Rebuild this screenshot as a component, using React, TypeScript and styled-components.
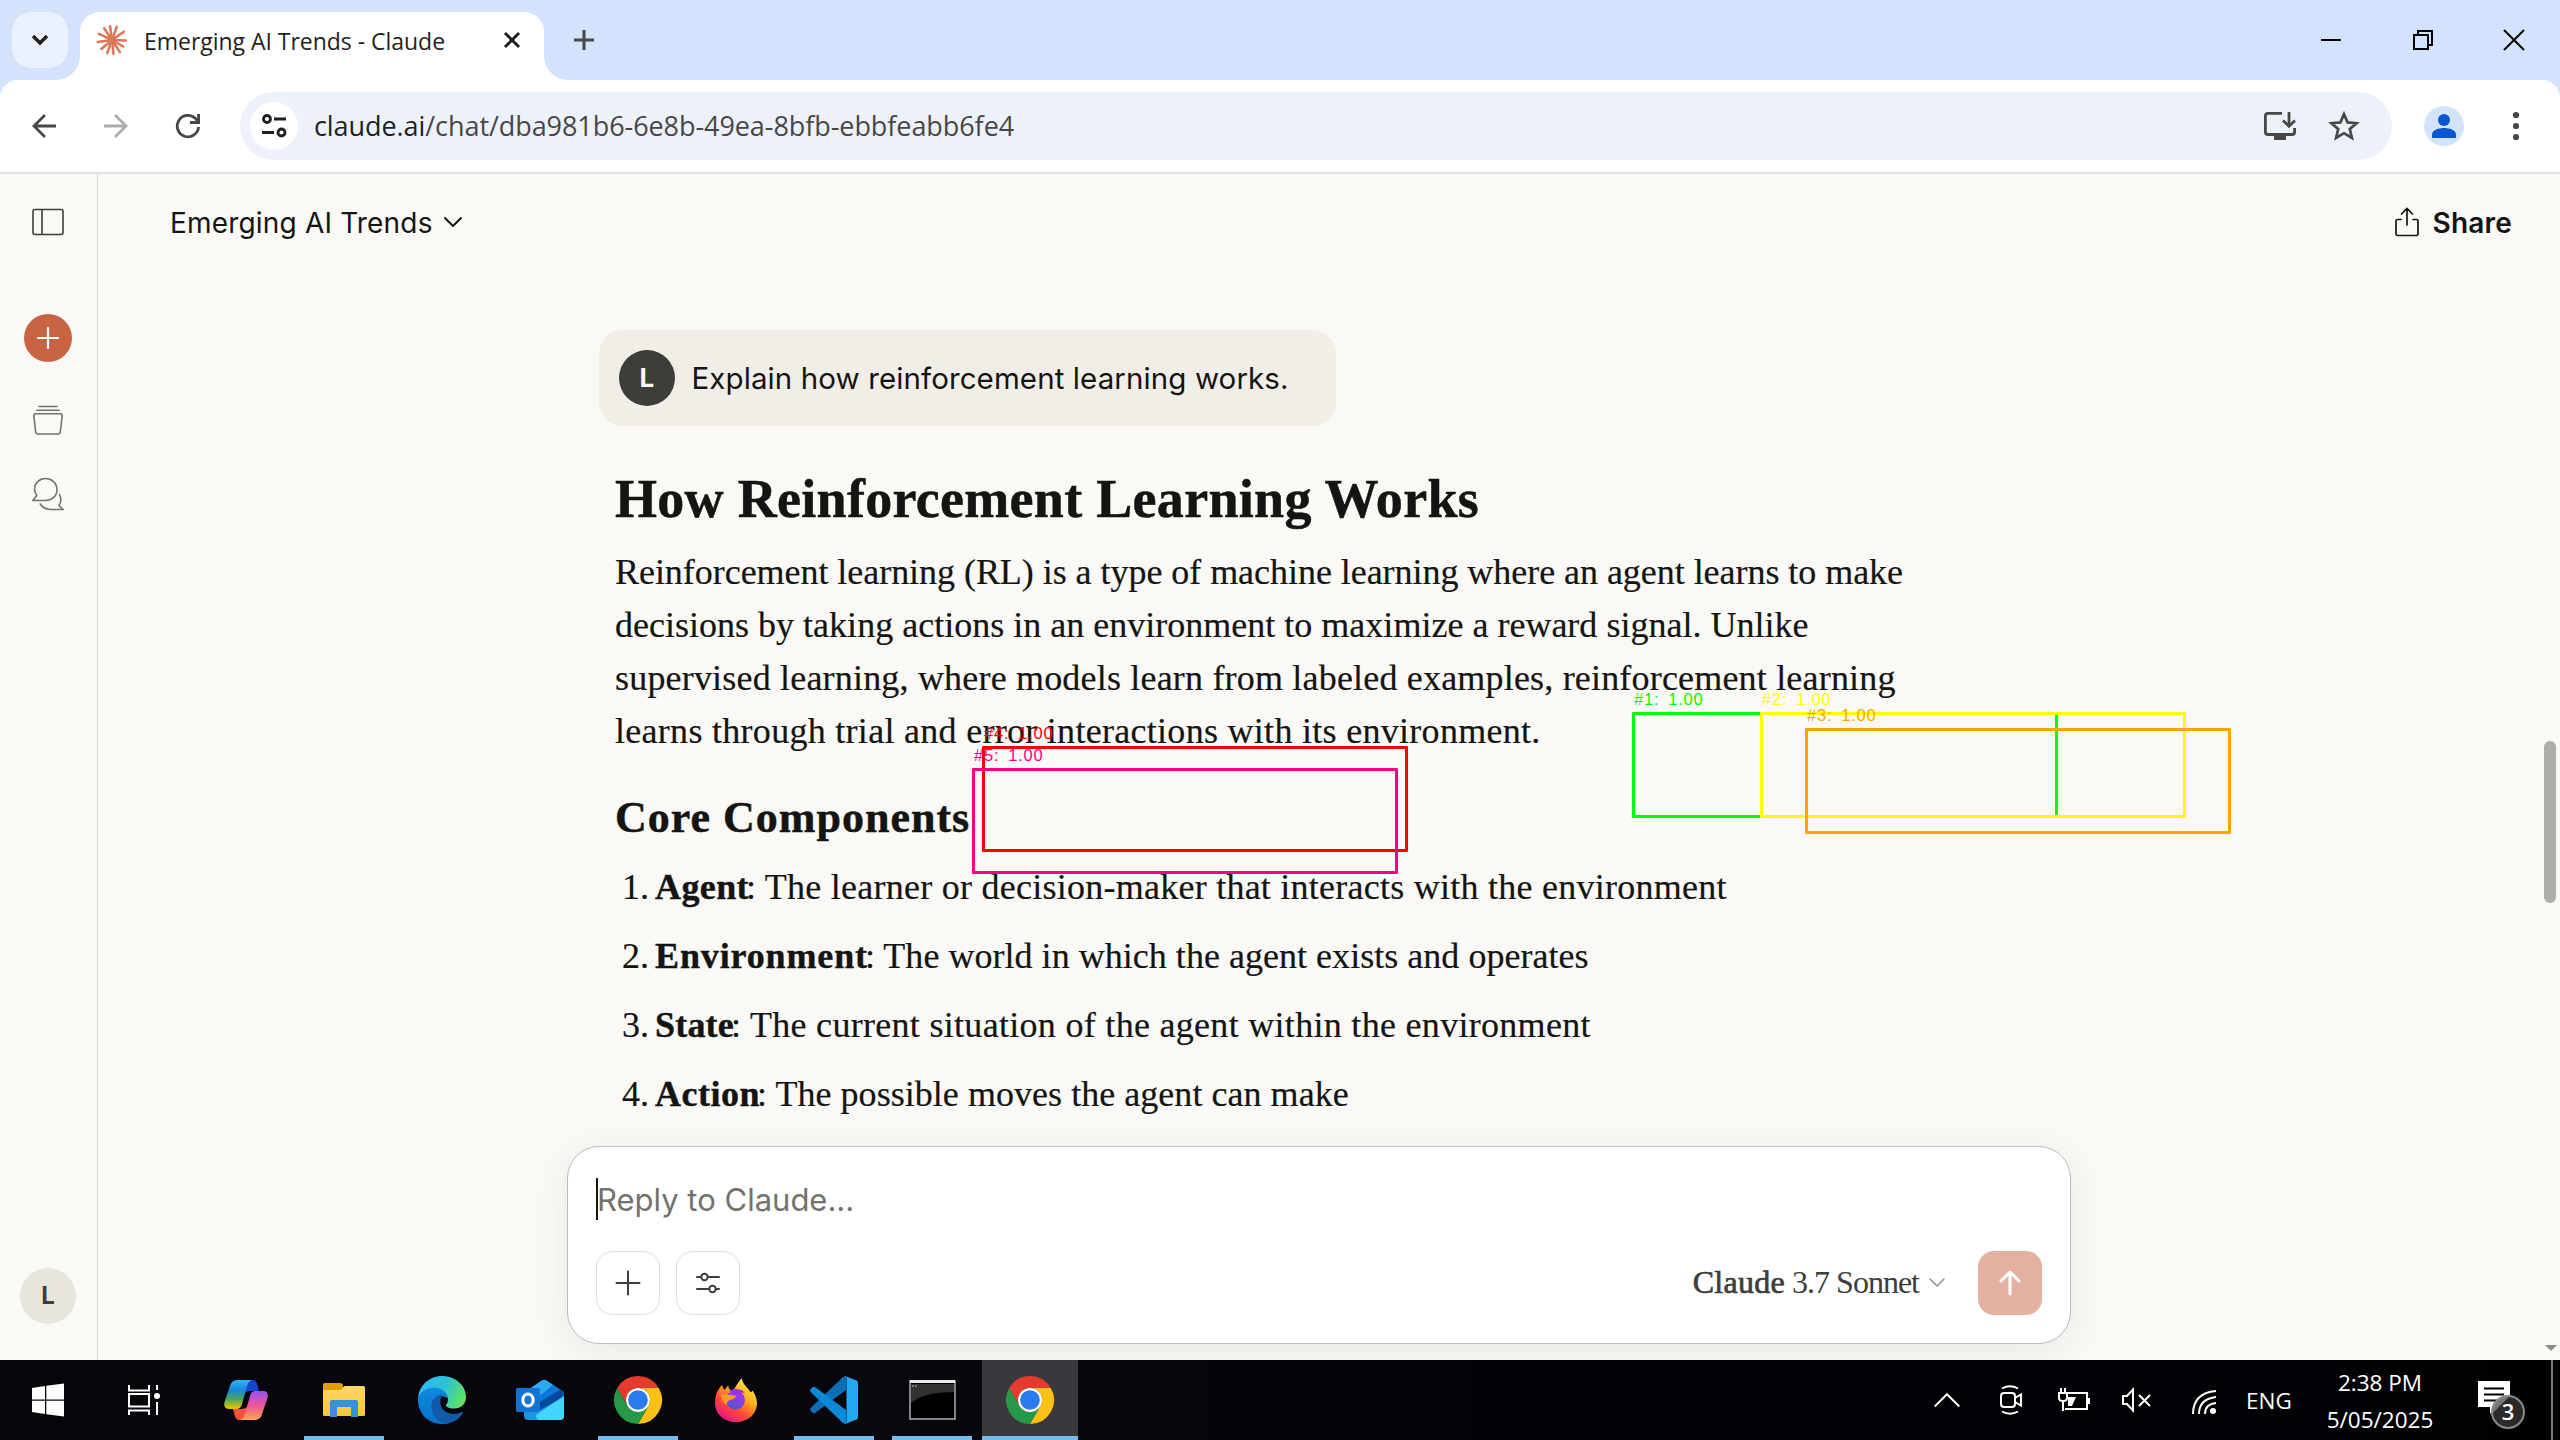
import React from "react";
import styled, { createGlobalStyle, css } from "styled-components";

const ui = `"Open Sans", "Noto Sans", sans-serif`;
const sans = `Inter, "Liberation Sans", sans-serif`;
const serif = `"Liberation Serif", "Noto Serif", serif`;

const Global = createGlobalStyle`
  * { box-sizing: border-box; }
  html, body { margin: 0; background: #faf9f5; }
  body { overflow: hidden; }
  svg { display: block; flex: none; overflow: visible; }
`;

const Screen = styled.div`
  position: relative;
  display: grid;
  grid-template-rows: 80px 94px 1186px 80px;
  width: 2560px;
  height: 1440px;
  overflow: hidden;
  background: #d3e3fd;
`;

/* ---------- browser chrome ---------- */
const TabStrip = styled.div`
  display: flex;
  padding: 12px 0 0 12px;
`;
const TabSearch = styled.div`
  display: grid;
  place-items: center;
  width: 56px;
  height: 56px;
  margin-right: 12px;
  border-radius: 20px;
  background: #ebf1fe;
`;
const Tab = styled.div`
  position: relative;
  display: flex;
  align-items: center;
  width: 464px;
  height: 68px;
  padding: 0 24px 12px 17px;
  border-radius: 20px 20px 0 0;
  background: #fff;
  &::before, &::after {
    content: "";
    position: absolute;
    bottom: 0;
    width: 24px;
    height: 24px;
  }
  &::before { left: -24px; background: radial-gradient(circle at 0 0, transparent 23.5px, #fff 24.2px); }
  &::after { right: -24px; background: radial-gradient(circle at 100% 0, transparent 23.5px, #fff 24.2px); }
`;
const TabTitle = styled.span`
  flex: 1;
  margin-left: 17px;
  padding-top: 2px;
  font: 400 23px/32px ${ui};
  letter-spacing: -0.03px;
  color: #1f1f1f;
  white-space: nowrap;
`;
const NewTab = styled.div`
  margin: 18px 0 0 30px;
`;
const WindowControls = styled.div`
  display: flex;
  gap: 71.500px;
  margin: 18px 36px 0 auto;
`;

const Toolbar = styled.div`
  display: flex;
  align-items: center;
  padding: 0 36px 0 26px;
  border-radius: 18px 18px 0 0;
  border-bottom: 2px solid #e1e1e1;
  background: #fff;
`;
const NavButton = styled.div<{ $dim?: boolean }>`
  display: grid;
  place-items: center;
  width: 36px;
  height: 36px;
  margin-right: 36px;
  color: ${(p) => (p.$dim ? "#acacac" : "#474747")};
`;
const AddressBar = styled.div`
  display: flex;
  align-items: center;
  width: 2152px;
  height: 68px;
  margin-left: -2px;
  padding: 0 32px 0 10px;
  border-radius: 34px;
  background: #edf1fa;
`;
const SiteInfo = styled.div`
  display: grid;
  place-items: center;
  width: 48px;
  height: 48px;
  border-radius: 50%;
  background: #fff;
`;
const Url = styled.span`
  flex: 1;
  margin-left: 16px;
  padding-bottom: 1px;
  font: 400 27px/36px ${ui};
  letter-spacing: -0.07px;
  color: #474747;
  white-space: nowrap;
  b { font-weight: 400; color: #1f1f1f; }
`;
const BarIcons = styled.div`
  display: flex;
  align-items: center;
  gap: 32px;
  color: #474747;
`;
const Profile = styled.div`
  display: grid;
  place-items: center;
  width: 40px;
  height: 40px;
  margin: 0 48px 0 32px;
  border-radius: 50%;
  background: #d3e3fd;
`;

/* ---------- page ---------- */
const Page = styled.div`
  display: grid;
  grid-template-columns: 98px 2443px 19px;
  background: #faf9f5;
  overflow: hidden;
`;
const Sidebar = styled.nav`
  display: flex;
  flex-direction: column;
  align-items: center;
  padding: 34px 1px 36px 0;
  border-right: 1px solid #d5d4cf;
`;
const NewChat = styled.div`
  display: grid;
  place-items: center;
  width: 48px;
  height: 48px;
  margin: 78px 0 43px;
  border-radius: 50%;
  background: #c96442;
`;
const ChatsLink = styled.div`
  margin-top: 42px;
`;
const Avatar = styled.div<{ $dark?: boolean }>`
  display: grid;
  place-items: center;
  flex: none;
  width: 56px;
  height: 56px;
  border-radius: 50%;
  font: 700 26px/56px ${sans};
  background: ${(p) => (p.$dark ? "#3d3d3a" : "#e8e6dc")};
  color: ${(p) => (p.$dark ? "#faf9f5" : "#3d3d3a")};
`;
const AccountAvatar = styled(Avatar)`
  margin-top: auto;
  font-size: 24px;
`;

const Main = styled.main`
  display: flex;
  flex-direction: column;
  min-height: 0;
  color: #141413;
`;
const ChatHeader = styled.header`
  display: flex;
  align-items: center;
  height: 98px;
  padding: 0 29px 0 72px;
  font: 400 28px/40px ${sans};
  letter-spacing: 0.18px;
`;
const TitleChevron = styled.div`
  margin: -2px auto 0 11px;
`;
const ShareButton = styled.div`
  display: flex;
  align-items: center;
  gap: 14px;
  font-weight: 600;
`;
const ShareIcon = styled.div`
  margin-top: -3px;
`;
const Messages = styled.section`
  display: flex;
  flex-direction: column;
  align-items: flex-start;
  height: 857px;
  padding: 58px 0 0 501px;
`;
const UserBubble = styled.div`
  display: flex;
  align-items: center;
  gap: 16.500px;
  width: 737px;
  height: 96px;
  padding: 0 20px;
  border-radius: 24px;
  background: #f0eee6;
  font: 400 29.5px/40px ${sans};
  letter-spacing: 0.1px;
  white-space: nowrap;
`;
const Answer = styled.article`
  width: 1400px;
  margin: 40.7px 0 0 16px;
  font: 400 36px/52.8px ${serif};
  -webkit-text-stroke: 0.2px #141413;
  white-space: nowrap;
`;
const Heading = styled.h1`
  margin: 0 0 14.500px;
  font: 700 54px/65px ${serif};
  letter-spacing: 0.3px;
  -webkit-text-stroke: 0.5px #141413;
`;
const Subheading = styled.h2`
  margin: 34.500px 0 17.500px;
  font: 700 44px/52px ${serif};
  letter-spacing: 1px;
  -webkit-text-stroke: 0.5px #141413;
`;
const Paragraph = styled.p`
  margin: 0;
`;
const TextLine = styled.span<{ $track: number }>`
  display: block;
  letter-spacing: ${(p) => p.$track}px;
`;
const Definition = styled(TextLine)`
  margin-left: -3px;
`;
const List = styled.ol`
  display: flex;
  flex-direction: column;
  gap: 16.1px;
  margin: 0;
  padding: 0;
  list-style: none;
`;
const Item = styled.li`
  display: grid;
  grid-template-columns: 40px auto auto 1fr;
`;
const Ordinal = styled.span`
  padding-right: 6px;
  text-align: right;
`;
const Term = styled.strong<{ $track: number }>`
  letter-spacing: ${(p) => p.$track}px;
  -webkit-text-stroke: 0.4px #141413;
`;

const Composer = styled.section`
  display: flex;
  flex-direction: column;
  justify-content: space-between;
  width: 1504px;
  height: 198px;
  margin: 17px 0 0 469px;
  padding: 31px 28px 28px;
  border: 1px solid #bcbcba;
  border-radius: 32px;
  background: #fff;
  box-shadow: 0 8px 40px rgba(0, 0, 0, 0.07);
`;
const Prompt = styled.div`
  display: flex;
  align-items: center;
  height: 42px;
  border-left: 2px solid #141413;
  font: 400 31px/42px ${sans};
  color: #73726c;
  span { padding-top: 1px; margin-left: -1px; }
`;
const Controls = styled.div`
  display: flex;
  align-items: center;
  gap: 16px;
`;
const ToolButton = styled.div`
  display: grid;
  place-items: center;
  width: 64px;
  height: 64px;
  border: 1px solid #dededc;
  border-radius: 16px;
  color: #3d3d3a;
`;
const ModelPicker = styled.div`
  display: flex;
  align-items: center;
  margin-left: auto;
  margin-right: 17px;
  padding-bottom: 2px;
  font: 400 32px/44px ${serif};
  color: #3d3d3a;
  white-space: nowrap;
`;
const ModelBrand = styled.span`
  margin-right: 7px;
  letter-spacing: 0.3px;
  -webkit-text-stroke: 0.7px #3d3d3a;
`;
const ModelName = styled.span`
  margin-right: 10px;
  letter-spacing: -1px;
`;
const Send = styled(ToolButton)`
  border: 0;
  background: #e4b1a0;
  color: #fff;
`;

const ScrollTrack = styled.div`
  display: flex;
  flex-direction: column;
  align-items: center;
  padding-top: 567px;
`;
const ScrollThumb = styled.div`
  width: 12px;
  height: 162px;
  margin-right: 1px;
  border-radius: 6px;
  background: #aeada9;
`;
const ScrollArrow = styled.div`
  margin: auto 0 9px;
  border: 6px solid transparent;
  border-top: 6px solid #8b8b8b;
  border-bottom: 0;
`;

/* ---------- detection boxes over the page ---------- */
const Detection = styled.div<{ $x: number; $y: number; $c: string }>`
  position: absolute;
  left: ${(p) => p.$x}px;
  top: ${(p) => p.$y}px;
  width: 426px;
  height: 106px;
  border: 3px solid ${(p) => p.$c};
  border-radius: 1px;
`;
const DetectionLabel = styled.span<{ $c: string }>`
  position: absolute;
  left: -1px;
  top: -26px;
  font: 400 16.500px/20px "Liberation Sans", sans-serif;
  letter-spacing: 0.8px;
  word-spacing: 3.5px;
  color: ${(p) => p.$c};
  white-space: nowrap;
`;

/* ---------- taskbar ---------- */
const Taskbar = styled.footer`
  display: flex;
  background: linear-gradient(90deg, #05050b, #08070d 35%, #020306 60%, #010104);
  color: #fff;
`;
const Slots = styled.div`
  display: flex;
  gap: 2px;
`;
const Slot = styled.div<{ $open?: boolean; $active?: boolean }>`
  display: grid;
  place-items: center;
  width: 96px;
  height: 80px;
  ${(p) => p.$open && css`background: linear-gradient(#76b9ed, #76b9ed) center bottom / 80px 4px no-repeat;`}
  ${(p) => p.$active && css`background: linear-gradient(#76b9ed, #76b9ed) center bottom / 96px 4px no-repeat, #39383d;`}
`;
const SystemSlots = styled.div`
  display: flex;
  margin-right: 6px;
`;
const Tray = styled.div`
  display: flex;
  align-items: center;
  margin-left: auto;
  font: 400 22.5px/37px ${ui};
`;
const TrayIcon = styled.div<{ $w: number }>`
  display: flex;
  justify-content: center;
  width: ${(p) => p.$w}px;
`;
const Clock = styled.div`
  width: 150px;
  margin: 1px 0 0 7px;
  text-align: center;
  white-space: pre;
`;
const Notifications = styled.div`
  position: relative;
  width: 48px;
  margin: -4px 25px 0 23px;
`;
const Badge = styled.span`
  position: absolute;
  left: 13px;
  top: 14px;
  width: 34px;
  height: 34px;
  border: 2px solid #8a8a8a;
  border-radius: 50%;
  background: linear-gradient(135deg, #777 0 26%, #2a2a2a 27%);
  font: 600 22px/29px ${ui};
  text-align: center;
`;
const ShowDesktop = styled.div`
  width: 9px;
  height: 80px;
  border-left: 2px solid #77777a;
`;

/* ---------- icons ---------- */
const Chevron = ({ w, h, sw, c = "currentColor" }: { w: number; h: number; sw: number; c?: string }) => (
  <svg width={w} height={h} fill="none" stroke={c} strokeWidth={sw} strokeLinecap="round" strokeLinejoin="round">
    <path d={`M1 1 L${w / 2} ${h - 1} L${w - 1} 1`} />
  </svg>
);

const Burst = () => {
  const rays = [[2, 14], [30, 13], [57, 14.5], [84, 14], [110, 14], [140, 14], [172, 14.5], [205, 14.5], [236, 14], [262, 14], [290, 14], [325, 14.5]];
  return (
    <svg width="30" height="30" viewBox="-15 -15 30 30" stroke="#d97757" strokeWidth="2.5" strokeLinecap="round">
      {rays.map(([a, r]) => (
        <line key={a} x1="0" y1="0" x2={r * Math.cos((a * Math.PI) / 180)} y2={r * Math.sin((a * Math.PI) / 180)} />
      ))}
      <circle r="4" fill="#d97757" stroke="none" />
    </svg>
  );
};

const ChromeLogo = () => (
  <svg width="48" height="48">
    <path fill="#e33b2e" d="M3.2 12A24 24 0 0 1 44.8 12H24A12 12 0 0 0 13.6 30Z" />
    <path fill="#fbc116" d="M44.8 12A24 24 0 0 1 24 48L34.4 30A12 12 0 0 0 24 12Z" />
    <path fill="#279847" d="M24 48A24 24 0 0 1 3.2 12L13.6 30A12 12 0 0 0 34.4 30Z" />
    <circle cx="24" cy="24" r="12" fill="#fff" />
    <circle cx="24" cy="24" r="9.8" fill="#2a7af0" />
  </svg>
);

const CopilotLogo = () => (
  <svg width="44" height="40">
    <defs>
      <linearGradient id="cpA" x1="0" y1="0" x2="0" y2="1">
        <stop offset="0" stopColor="#2cb6f5" /><stop offset=".35" stopColor="#1787dc" />
        <stop offset=".65" stopColor="#48a55f" /><stop offset="1" stopColor="#f6c500" />
      </linearGradient>
      <linearGradient id="cpB" x1="0" y1="0" x2="0" y2="1">
        <stop offset="0" stopColor="#9b50f5" /><stop offset=".5" stopColor="#ee5497" /><stop offset="1" stopColor="#ffa657" />
      </linearGradient>
    </defs>
    <path fill="#1546cf" d="M24 0H28C31.500 0 32.500 2 33.500 5L35 11H28C25 11 23 11 20 14Z" />
    <path fill="#f4513b" d="M20 40H16C12.500 40 11.500 38 10.500 35L9 29H16C19 29 21 29 24 26Z" />
    <path fill="url(#cpA)" d="M14 0H29C25.500 0 24 3 22.500 8L18 24C17 28 15 29 12 29H5C1 29 -.5 26 .5 22L6 6C7 2 10 0 14 0Z" />
    <path fill="url(#cpB)" d="M30 40H15C18.500 40 20 37 21.500 32L26 16C27 12 29 11 32 11H39C43 11 44.500 14 43.500 18L38 34C37 38 34 40 30 40Z" />
  </svg>
);

const FolderLogo = () => (
  <svg width="42" height="34">
    <defs>
      <linearGradient id="fo" x1="0" y1="0" x2="0" y2="1"><stop offset="0" stopColor="#ffd86a" /><stop offset="1" stopColor="#fdc634" /></linearGradient>
    </defs>
    <path fill="#e0a000" d="M0 1.500Q0 0 1.500 0H17Q20 0 20 3V10H0Z" />
    <path fill="url(#fo)" d="M0 7H17Q19 7 20 4.500Q20.500 3 22 3H40.500Q42 3 42 4.500V31.500Q42 33 40.500 33H1.500Q0 33 0 31.500Z" />
    <path fill="#3690dc" d="M7 34V19Q7 17 9 17H33Q35 17 35 19V34H28V24H14V34Z" />
  </svg>
);

const EdgeLogo = () => (
  <svg width="48" height="48">
    <defs>
      <linearGradient id="eA" x1="0" y1=".4" x2="1" y2=".7">
        <stop offset="0" stopColor="#2fb9f7" /><stop offset=".5" stopColor="#2cc3cf" /><stop offset="1" stopColor="#66e656" />
      </linearGradient>
      <linearGradient id="eB" x1="0" y1="0" x2="0" y2="1"><stop offset="0" stopColor="#0e8be0" /><stop offset="1" stopColor="#0673cc" /></linearGradient>
    </defs>
    <path fill="url(#eB)" d="M0 24C1 16 8 10 16 10.500C25 11 30 17 30 22L24 20C19 22 19 38 32 47C29 48 26 48 24 48C10 48 0 37 0 24Z" />
    <path fill="url(#eA)" d="M0 24C0 10 11 0 24 0C38 0 48 10 48 21C48 28 43 32.500 36 32.500C31 32.500 28 31 28 29.500C28 28 30 27.500 30 23C30 17 24 11.500 16 11.500C8 11.500 1 16.500 0 24Z" />
    <path fill="#1259a8" d="M21 19C14.500 21.500 12.500 28 13.500 33C15.500 42 22 47.500 29 47.500C36 47 42 42 44.500 37.500C45 36.300 44 35.800 43 36.300C35 40 24 37 22.500 28C22 24 23 21 24.500 18.800Z" />
  </svg>
);

const OutlookLogo = () => (
  <svg width="48" height="40">
    <path fill="#1c93e3" d="M8 13L25 1Q28 -1 31 1L48 12V36Q48 40 44 40H12Q8 40 8 36Z" />
    <path fill="#2caaf0" d="M12 10L25 1Q28 -1 31 1L37 5L20 18Z" />
    <path fill="#0a78d6" d="M24 16L37 5L44 9.500L24 23Z" />
    <path fill="#07479c" d="M24 22L44 9.500L47 11.500Q49 14 47 17L24 30Z" />
    <path fill="#45d4fb" d="M20 35L48 16V36Q48 40 44 40H24Q20 40 20 36Z" />
    <rect y="8" width="24" height="24" rx="2" fill="#1173d4" />
    <ellipse cx="12" cy="20" rx="5.200" ry="6" fill="none" stroke="#fff" strokeWidth="3" />
  </svg>
);

const FirefoxLogo = () => (
  <svg width="42" height="44">
    <defs>
      <linearGradient id="fA" x1=".85" y1=".1" x2=".25" y2="1">
        <stop offset="0" stopColor="#fff04c" /><stop offset=".35" stopColor="#ffab1c" /><stop offset=".65" stopColor="#ff4a35" /><stop offset="1" stopColor="#e51288" />
      </linearGradient>
      <linearGradient id="fB" x1=".7" y1="0" x2=".3" y2="1"><stop offset="0" stopColor="#b133ef" /><stop offset="1" stopColor="#4f55cf" /></linearGradient>
    </defs>
    <path fill="url(#fA)" d="M1 17C2 13 4 11 6 8L7.500 7C7 9 8.500 11 10 12C11 9.500 12.500 8 13.500 7.500C13 10 14.500 12 17 12.500C20 12 21 6 27 0C27 5 31 8 34 12C35 14 36.500 15 37 13L37.500 12.500C41 18 42 22 42 25C42 36 33 44 21 44C9 44 0 36 0 25C0 21 .5 19 1 17Z" />
    <circle cx="20.500" cy="22" r="9.500" fill="url(#fB)" />
    <path fill="#ff9a1f" d="M6 17C10 15 15 18 20.500 17.500C21.500 19 19 21 16.500 21.500C13 22.500 12 24 11.500 27C8 25 6 21 6 17Z" />
    <path fill="#9c2fe0" d="M14 13C19 9.500 27 11 30 15L25 14.500L28 18L20 16Z" />
  </svg>
);

const CodeLogo = () => (
  <svg width="48" height="48">
    <path fill="#0b6fb6" d="M.6 32L33 1Q34.500 0 36 0V14L5 37Q4 37.500 3 37L.6 35Q-.5 33.500 .6 32Z" />
    <path fill="#0a8ad8" d="M.6 13L3 11Q4 10.500 5 11L36 34V48Q34.500 48 33 47L.6 16Q-.5 14.500 .6 13Z" />
    <path fill="#23a8f2" d="M35 0L46.500 4.500Q48 5 48 7V41Q48 43 46.500 43.500L35 48Q36.500 47.500 36.500 45V3Q36.500 .5 35 0Z" />
  </svg>
);

const TerminalLogo = () => (
  <svg width="47" height="40">
    <rect x="1" y="1" width="45" height="38" fill="#000" stroke="#a9abb5" strokeWidth="1.500" />
    <rect x="1" y="0" width="45" height="3" fill="#e8e9ee" />
    <path fill="#323233" d="M2 4H45V12Q14 12 2 23Z" />
    <path stroke="#bbb" strokeWidth="1" strokeDasharray="2 1" d="M3 6H8" />
  </svg>
);

const list = [
  { term: "Agent", a: 0.4, rest: ": The learner or decision-maker that interacts with the environment", b: 0.25 },
  { term: "Environment", a: 0.87, rest: ": The world in which the agent exists and operates", b: 0.03 },
  { term: "State", a: 0.2, rest: ": The current situation of the agent within the environment", b: 0.3 },
  { term: "Action", a: 0.5, rest: ": The possible moves the agent can make", b: 0.04 },
];

const detections = [
  { x: 1632, y: 712, c: "#00ff00" },
  { x: 1760, y: 712, c: "#ffff00" },
  { x: 1805, y: 728, c: "#ffa500" },
  { x: 982, y: 746, c: "#ff0000" },
  { x: 972, y: 768, c: "#ff0080" },
];

export default function App() {
  return (
    <Screen>
      <Global />
      <TabStrip>
        <TabSearch>
          <svg width="16" height="10" fill="none" stroke="#1f1f1f" strokeWidth="3.4"><path d="M1 1L8 8L15 1" /></svg>
        </TabSearch>
        <Tab>
          <Burst />
          <TabTitle>Emerging AI Trends - Claude</TabTitle>
          <svg width="16" height="16" stroke="#1f1f1f" strokeWidth="3"><path d="M1 1L15 15M15 1L1 15" /></svg>
        </Tab>
        <NewTab>
          <svg width="20" height="20" stroke="#474747" strokeWidth="3"><path d="M10 0V20M0 10H20" /></svg>
        </NewTab>
        <WindowControls>
          <svg width="20" height="20" stroke="#000" strokeWidth="2"><path d="M0 10H20" /></svg>
          <svg width="20" height="20" fill="none" stroke="#000" strokeWidth="2"><path d="M1 5H15V19H1ZM5 5V1H19V15H15" /></svg>
          <svg width="20" height="20" stroke="#000" strokeWidth="2"><path d="M0 0L20 20M20 0L0 20" /></svg>
        </WindowControls>
      </TabStrip>

      <Toolbar>
        <NavButton>
          <svg width="24" height="24" fill="none" stroke="currentColor" strokeWidth="2.8"><path d="M24 12H2M13 1L2 12L13 23" /></svg>
        </NavButton>
        <NavButton $dim>
          <svg width="24" height="24" fill="none" stroke="currentColor" strokeWidth="2.8"><path d="M0 12H22M11 1L22 12L11 23" /></svg>
        </NavButton>
        <NavButton>
          <svg width="24" height="24" fill="none" stroke="currentColor" strokeWidth="2.8"><path d="M22.600 13A10.700 10.700 0 1 1 19.500 4.500L22.600 8M22.600 0V8.500H14" /></svg>
        </NavButton>
        <AddressBar>
          <SiteInfo>
            <svg width="24" height="24" fill="none" stroke="#1f1f1f" strokeWidth="2.8">
              <circle cx="5" cy="5" r="3.500" /><path d="M12 5H24M0 18.500H12" /><circle cx="19.500" cy="18.500" r="3.500" />
            </svg>
          </SiteInfo>
          <Url><b>claude.ai</b>/chat/dba981b6-6e8b-49ea-8bfb-ebbfeabb6fe4</Url>
          <BarIcons>
            <svg width="32" height="28" fill="none" stroke="currentColor" strokeWidth="2.800">
              <path d="M18 1.400H4Q1.400 1.400 1.400 4V20Q1.400 22.500 4 22.500H28Q30.600 22.500 30.600 20V16" />
              <path d="M25 0V14M19 8.500L25 14.200L31 8.500" /><path d="M10 25.500H22" strokeWidth="5" />
            </svg>
            <svg width="32" height="30" fill="none" stroke="currentColor" strokeWidth="2.700">
              <path d="M16 3.200L19.600 11.400L28.600 12.200L21.800 18.100L23.900 26.900L16 22.200L8.100 26.900L10.200 18.100L3.400 12.200L12.400 11.400Z" />
            </svg>
          </BarIcons>
        </AddressBar>
        <Profile>
          <svg width="24" height="24" fill="#0b57d0"><circle cx="12" cy="6" r="6" /><path d="M0 24V20.500C0 16 7 14 12 14S24 16 24 20.500V24Z" /></svg>
        </Profile>
        <svg width="8" height="28" fill="#474747"><circle cx="4" cy="3" r="3.100" /><circle cx="4" cy="14" r="3.100" /><circle cx="4" cy="25" r="3.100" /></svg>
      </Toolbar>

      <Page>
        <Sidebar>
          <svg width="32" height="28" fill="none" stroke="#3d3d3a" strokeWidth="1.600"><rect x="1" y="1.500" width="30" height="25" rx="2" /><path d="M10 1.500V26.500" /></svg>
          <NewChat>
            <svg width="20" height="20" stroke="#fff" strokeWidth="2.200" strokeLinecap="round"><path d="M10 0V20M0 10H20" /></svg>
          </NewChat>
          <svg width="30" height="30" fill="none" stroke="#73726c" strokeWidth="1.600" strokeLinecap="round">
            <path d="M6 1.500H24M4 5.200H26" /><path d="M3 8.800H27Q29.500 8.800 29.200 11L27.300 27Q27 29 25 29H5Q3 29 2.700 27L.8 11Q.5 8.800 3 8.800Z" />
          </svg>
          <ChatsLink>
            <svg width="32" height="34" fill="none" stroke="#73726c" strokeWidth="1.600" strokeLinejoin="round" strokeLinecap="round">
              <path d="M13.500 1.500C19.500 1.500 25 6 25 12.800C25 19.500 19.500 23.500 13.500 23.500H.8L4.800 18.500C3.500 16.500 2.500 15 2.500 12.500C2.500 6 7.500 1.500 13.500 1.500Z" />
              <path d="M27.500 17.500C29.500 21.500 29 25.500 26.800 28.500L31.200 32.500H19C14.500 32.500 10.500 30.500 8.300 27" />
            </svg>
          </ChatsLink>
          <AccountAvatar>L</AccountAvatar>
        </Sidebar>

        <Main>
          <ChatHeader>
            Emerging AI Trends
            <TitleChevron><Chevron w={18} h={10} sw={2} /></TitleChevron>
            <ShareButton>
              <ShareIcon>
                <svg width="24" height="30" fill="none" stroke="#141413" strokeWidth="1.700" strokeLinecap="round">
                  <path d="M12 18V1.500M6.500 7L12 1.500L17.500 7M6 12.500H2.500Q1 12.500 1 14V27Q1 28.500 2.500 28.500H21.500Q23 28.500 23 27V14Q23 12.500 21.500 12.500H18" />
                </svg>
              </ShareIcon>
              Share
            </ShareButton>
          </ChatHeader>

          <Messages>
            <UserBubble>
              <Avatar $dark>L</Avatar>
              Explain how reinforcement learning works.
            </UserBubble>
            <Answer>
              <Heading>How Reinforcement Learning Works</Heading>
              <Paragraph>
                <TextLine $track={-0.04}>Reinforcement learning (RL) is a type of machine learning where an agent learns to make</TextLine>
                <TextLine $track={0.01}>decisions by taking actions in an environment to maximize a reward signal. Unlike</TextLine>
                <TextLine $track={0.19}>supervised learning, where models learn from labeled examples, reinforcement learning</TextLine>
                <TextLine $track={0.29}>learns through trial and error interactions with its environment.</TextLine>
              </Paragraph>
              <Subheading>Core Components</Subheading>
              <List>
                {list.map((it, i) => (
                  <Item key={it.term}>
                    <Ordinal>{i + 1}.</Ordinal>
                    <Term $track={it.a}>{it.term}</Term>
                    <Definition $track={it.b}>{it.rest}</Definition>
                  </Item>
                ))}
              </List>
            </Answer>
          </Messages>

          <Composer>
            <Prompt><span>Reply to Claude...</span></Prompt>
            <Controls>
              <ToolButton>
                <svg width="24" height="24" stroke="currentColor" strokeWidth="2" strokeLinecap="round"><path d="M12 0.500V23.500M0.500 12H23.500" /></svg>
              </ToolButton>
              <ToolButton>
                <svg width="24" height="20" fill="none" stroke="currentColor" strokeWidth="2" strokeLinecap="round">
                  <path d="M1 4H5M12 4H23M1 16H13M20 16H23" /><circle cx="8.500" cy="4" r="3.200" /><circle cx="16.500" cy="16" r="3.200" />
                </svg>
              </ToolButton>
              <ModelPicker>
                <ModelBrand>Claude</ModelBrand>
                <ModelName>3.7 Sonnet</ModelName>
                <Chevron w={16} h={9} sw={1.5} c="#8f8e89" />
              </ModelPicker>
              <Send>
                <svg width="22" height="26" fill="none" stroke="currentColor" strokeWidth="3" strokeLinecap="round" strokeLinejoin="round"><path d="M11 24V2M2 11L11 2L20 11" /></svg>
              </Send>
            </Controls>
          </Composer>
        </Main>

        <ScrollTrack>
          <ScrollThumb />
          <ScrollArrow />
        </ScrollTrack>
      </Page>

      <Taskbar>
        <SystemSlots>
          <Slot>
            <svg width="32" height="34" fill="#fff"><path d="M0 5L13 3V16.500H0ZM14.300 2.700L32 .5V16.500H14.300ZM0 17.700H13V31L0 29ZM14.300 17.700H32V33.500L14.300 31.300Z" /></svg>
          </Slot>
          <Slot>
            <svg width="32" height="30" fill="none" stroke="#fff" strokeWidth="2">
              <path d="M1 0V5.500H21V0M1 30V25.500H21V30M1 9H21V21.500H1ZM29 0V5M29 17V30" /><circle cx="29" cy="11" r="3" fill="#fff" stroke="none" />
            </svg>
          </Slot>
        </SystemSlots>
        <Slots>
          <Slot><CopilotLogo /></Slot>
          <Slot $open><FolderLogo /></Slot>
          <Slot><EdgeLogo /></Slot>
          <Slot><OutlookLogo /></Slot>
          <Slot $open><ChromeLogo /></Slot>
          <Slot><FirefoxLogo /></Slot>
          <Slot $open><CodeLogo /></Slot>
          <Slot $open><TerminalLogo /></Slot>
          <Slot $active><ChromeLogo /></Slot>
        </Slots>
        <Tray>
          <TrayIcon $w={65}>
            <svg width="26" height="14" fill="none" stroke="#fff" strokeWidth="2"><path d="M.7 13.500L13 1.200L25.300 13.500" /></svg>
          </TrayIcon>
          <TrayIcon $w={63}>
            <svg width="22" height="30" fill="none" stroke="#fff" strokeWidth="2">
              <rect x="1" y="8" width="14" height="14" rx="3" /><path d="M15 13L21 9.500V20.500L15 17" /><path d="M2 3.500Q10 -1 18 3.500M2 26.500Q10 31 18 26.500" />
            </svg>
          </TrayIcon>
          <TrayIcon $w={63}>
            <svg width="32" height="24" fill="none" stroke="#fff" strokeWidth="2">
              <path d="M10 5H29V21H7M31 10V16M5 13V23" /><path d="M1 5V10Q1 13 5 13T9 10V5ZM3 0V5M7 0V5" /><path d="M10 9H18L14 18H10Z" fill="#fff" stroke="none" />
            </svg>
          </TrayIcon>
          <TrayIcon $w={62}>
            <svg width="29" height="24" fill="none" stroke="#fff" strokeWidth="2">
              <path d="M1 8V16H5L11 22.500V1.500L5 8Z" /><path d="M17 7L28 18M28 7L17 18" />
            </svg>
          </TrayIcon>
          <TrayIcon $w={73}>
            <svg width="24" height="20" fill="none" stroke="#fff" strokeWidth="2">
              <path d="M1 24Q1 3 24 1M7 24Q7 9 24 7M13 24Q13 14 24 13" /><circle cx="21" cy="21" r="3" fill="#fff" stroke="none" />
            </svg>
          </TrayIcon>
          <TrayIcon $w={58}>ENG</TrayIcon>
          <Clock>{"2:38 PM\n5/05/2025"}</Clock>
          <Notifications>
            <svg width="32" height="34">
              <path fill="#fff" d="M0 0H32V26H18L12 33V26H0Z" /><path stroke="#000" strokeWidth="2" d="M6 7.500H26M6 13.500H26M6 19.500H26" />
            </svg>
            <Badge>3</Badge>
          </Notifications>
          <ShowDesktop />
        </Tray>
      </Taskbar>

      {detections.map((d, i) => (
        <Detection key={d.c} $x={d.x} $y={d.y} $c={d.c}>
          <DetectionLabel $c={d.c}>{`#${i + 1}: 1.00`}</DetectionLabel>
        </Detection>
      ))}
    </Screen>
  );
}
